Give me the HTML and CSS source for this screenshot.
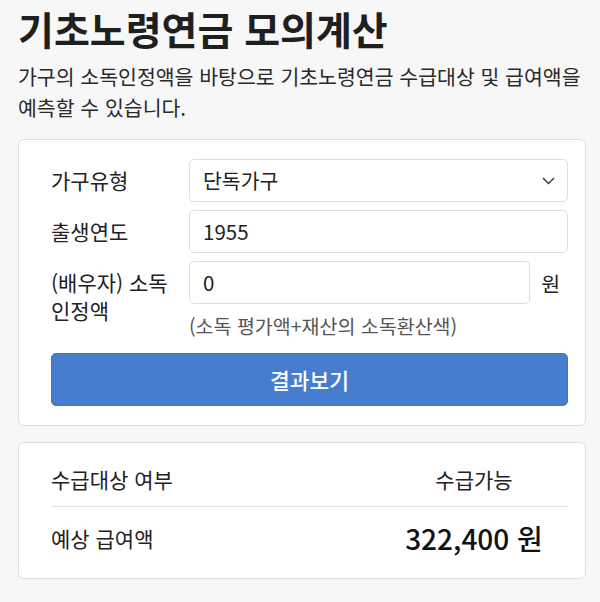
FILE: index.html
```html
<!DOCTYPE html>
<html lang="ko">
  <head>
    <meta charset="utf-8" />
    <title>기초노령연금 모의계산</title>
    <link rel="stylesheet" href="styles.css">
  </head>
  <body>
    <h1>기초노령연금 모의계산</h1>
    <p class="intro">
      가구의 소독인정액을 바탕으로 기초노령연금 수급대상 및 급여액을
      예측할 수 있습니다.
    </p>

    <div class="card form-card">
      <div class="form-grid">
        <label class="label">가구유형</label>
        <div class="field select-field">
          <span>단독가구</span>
          <svg class="chevron" width="13" height="8" viewBox="0 0 13 8">
            <polyline points="1,1 6.5,6.5 12,1" fill="none" stroke="#333" stroke-width="1.4" />
          </svg>
        </div>

        <label class="label">출생연도</label>
        <div class="field">1955</div>

        <label class="label label-two">(배우자) 소독<br />인정액</label>
        <div class="income">
          <div class="income-row">
            <div class="field income-field">0</div>
            <span class="unit">원</span>
          </div>
          <div class="hint">(소독 평가액+재산의 소독환산색)</div>
        </div>
      </div>
      <button class="submit-button">결과보기</button>
    </div>

    <div class="card result-card">
      <table class="result-table">
        <tr>
          <td>수급대상 여부</td>
          <td class="value">수급가능</td>
        </tr>
        <tr class="amount-row">
          <td>예상 급여액</td>
          <td class="value amount">322,400 원</td>
        </tr>
      </table>
    </div>
  </body>
</html>
```

FILE: styles.css
```css
body {
  font-family: "Noto Sans CJK KR", "Noto Sans", sans-serif;
  background-color: #f7f7f7;
  color: #222;
  margin: 0;
  padding: 0 14px 0 18px;
}

h1 {
  font-size: 39px;
  font-weight: 700;
  line-height: 57px;
  margin: 0;
  color: #1f1f1f;
}

.intro {
  font-size: 20.5px;
  line-height: 31px;
  margin: 4px 0 16px;
  color: #2a2a2a;
}

.card {
  background: #fff;
  border: 1px solid #dadee1;
  border-radius: 6px;
}

.form-card {
  padding: 19px 17px 19px 32px;
}

.form-grid {
  display: grid;
  grid-template-columns: 138px 1fr;
  row-gap: 8px;
  align-items: start;
}

.label {
  font-size: 21px;
  line-height: 43px;
  white-space: nowrap;
}

.label-two {
  line-height: 28px;
  padding-top: 7px;
}

.field {
  height: 41px;
  border: 1px solid #dcdfe2;
  border-radius: 5px;
  padding: 0 13px;
  font-size: 20.5px;
  line-height: 41px;
  background: #fff;
}

.select-field {
  display: flex;
  justify-content: space-between;
  align-items: center;
}

.chevron {
  margin-right: -1px;
}

.income-row {
  display: flex;
  align-items: center;
  gap: 11px;
}

.income-field {
  flex: 1;
}

.unit {
  font-size: 20.5px;
  padding-right: 8px;
}

.hint {
  font-size: 19.5px;
  line-height: 22px;
  color: #555;
  margin-top: 11px;
}

.submit-button {
  display: block;
  width: 100%;
  height: 53px;
  margin-top: 16px;
  background: #467dcf;
  color: #fff;
  border: 1px solid #3f74c4;
  border-radius: 5px;
  font-family: inherit;
  font-size: 21.5px;
  font-weight: 500;
}

.result-card {
  margin-top: 16px;
  padding: 9px 17px 10px 32px;
}

.result-table {
  width: 100%;
  border-collapse: collapse;
}

.result-table td {
  font-size: 21px;
  line-height: 28px;
  padding: 13px 0;
}

.result-table tr:first-child td {
  border-bottom: 1px solid #dde1e4;
}

.result-table .value {
  width: 188px;
  text-align: center;
}

.amount-row td {
  padding: 14px 0 13px;
}

.result-table .amount {
  font-size: 28px;
  font-weight: 500;
  line-height: 34px;
  color: #111;
}
```
